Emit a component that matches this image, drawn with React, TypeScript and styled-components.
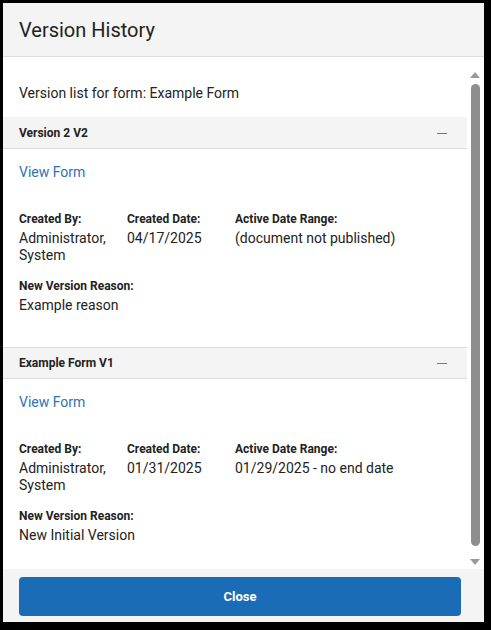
import React from "react";
import styled, { createGlobalStyle } from "styled-components";

const Global = createGlobalStyle`
  html, body { margin: 0; padding: 0; background: #000; }
  body { font-family: Roboto, "Liberation Sans", Arial, sans-serif; color: #222; }
  * { box-sizing: border-box; }
`;

const Frame = styled.div`
  width: 491px;
  height: 630px;
  padding: 3px 7px 8px 3px;
  background: #000;
`;

const Dialog = styled.div`
  width: 481px;
  height: 619px;
  background: #fff;
  display: flex;
  flex-direction: column;
  overflow: hidden;
`;

const Header = styled.div`
  height: 54px;
  flex: none;
  background: #f4f4f4;
  border-bottom: 1px solid #dedede;
  display: flex;
  align-items: center;
  padding: 0 16px;
`;

const Title = styled.h1`
  margin: 0;
  font-size: 20px;
  font-weight: 400;
  color: #222;
  line-height: 24px;
  padding-top: 1px;
`;

const Body = styled.div`
  flex: 1;
  display: flex;
  min-height: 0;
`;

const Content = styled.div`
  width: 464px;
  flex: none;
  overflow: hidden;
`;

const Intro = styled.p`
  margin: 0;
  padding: 26px 16px 0;
  height: 60px;
  font-size: 14px;
  line-height: 20px;
`;

const SectionHeader = styled.div<{ $topLine?: string }>`
  height: 32px;
  background: #f4f4f4;
  border-top: 1px solid ${(p) => p.$topLine || "#e4e4e4"};
  border-bottom: 1px solid #dcdcdc;
  display: flex;
  align-items: center;
  justify-content: space-between;
  padding: 0 16px;
`;

const SectionTitle = styled.span`
  font-size: 12px;
  font-weight: 700;
  color: #222;
`;

const Collapse = styled.span`
  width: 10px;
  height: 1px;
  background: #7a7a7a;
  margin-right: 4px;
`;

const SectionBody = styled.div`
  padding: 13px 16px 0;
  height: 198px;
`;

const Link = styled.a`
  display: block;
  font-size: 14px;
  line-height: 20px;
  color: #2f72b6;
  text-decoration: none;
  cursor: pointer;
`;

const Fields = styled.div`
  display: grid;
  grid-template-columns: 100px 100px 1fr;
  column-gap: 8px;
  margin-top: 29px;
`;

const Field = styled.div`
  display: flex;
  flex-direction: column;
`;

const Label = styled.div`
  font-size: 12px;
  font-weight: 700;
  line-height: 16px;
  color: #222;
`;

const Value = styled.div`
  font-size: 14px;
  line-height: 17px;
  margin-top: 3px;
  color: #222;
`;

const Reason = styled.div`
  margin-top: 14px;
`;

const Rail = styled.div`
  width: 10px;
  margin-left: 3px;
  flex: none;
  display: flex;
  flex-direction: column;
  align-items: center;
  padding: 15px 0 4px;
`;

const Arrow = styled.div<{ $down?: boolean }>`
  width: 0;
  height: 0;
  border-left: 5px solid transparent;
  border-right: 5px solid transparent;
  ${(p) =>
    p.$down
      ? "border-top: 6px solid #9a9a9a;"
      : "border-bottom: 6px solid #9a9a9a;"}
  flex: none;
`;

const Thumb = styled.div`
  width: 9px;
  flex: 1;
  background: #8e8e8e;
  border-radius: 5px;
  margin: 6px 0 13px;
`;

const Footer = styled.div`
  flex: none;
  height: 53px;
  background: #f4f4f4;
  padding: 8px 23px 5px 16px;
`;

const CloseButton = styled.button`
  width: 100%;
  height: 39px;
  border: none;
  border-radius: 4px;
  background: #1b6cb6;
  color: #fff;
  font-family: Roboto, "Liberation Sans", Arial, sans-serif;
  font-size: 13px;
  font-weight: 700;
  cursor: pointer;
`;

type Version = {
  title: string;
  date: string;
  range: string;
  reason: string;
  topLine?: string;
};

const versions: Version[] = [
  {
    title: "Version 2 V2",
    date: "04/17/2025",
    range: "(document not published)",
    reason: "Example reason",
    topLine: "#f4f4f4",
  },
  {
    title: "Example Form V1",
    date: "01/31/2025",
    range: "01/29/2025 - no end date",
    reason: "New Initial Version",
    topLine: "#dcdcdc",
  },
];

export default function App() {
  return (
    <>
      <Global />
      <Frame>
        <Dialog>
          <Header>
            <Title>Version History</Title>
          </Header>
          <Body>
            <Content>
              <Intro>Version list for form: Example Form</Intro>
              {versions.map((v) => (
                <section key={v.title}>
                  <SectionHeader $topLine={v.topLine}>
                    <SectionTitle>{v.title}</SectionTitle>
                    <Collapse />
                  </SectionHeader>
                  <SectionBody>
                    <Link>View Form</Link>
                    <Fields>
                      <Field>
                        <Label>Created By:</Label>
                        <Value>Administrator, System</Value>
                      </Field>
                      <Field>
                        <Label>Created Date:</Label>
                        <Value>{v.date}</Value>
                      </Field>
                      <Field>
                        <Label>Active Date Range:</Label>
                        <Value>{v.range}</Value>
                      </Field>
                    </Fields>
                    <Reason>
                      <Label>New Version Reason:</Label>
                      <Value>{v.reason}</Value>
                    </Reason>
                  </SectionBody>
                </section>
              ))}
            </Content>
            <Rail>
              <Arrow />
              <Thumb />
              <Arrow $down />
            </Rail>
          </Body>
          <Footer>
            <CloseButton>Close</CloseButton>
          </Footer>
        </Dialog>
      </Frame>
    </>
  );
}
